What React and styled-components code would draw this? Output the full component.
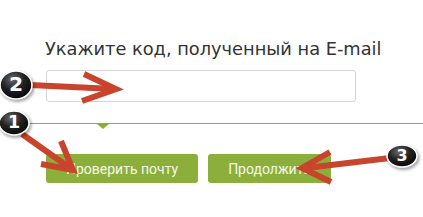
import styled, { createGlobalStyle } from "styled-components";

const Global = createGlobalStyle`
  html, body {
    margin: 0;
    padding: 0;
    background: #fff;
  }
`;

const Page = styled.div`
  position: relative;
  width: 423px;
  height: 217px;
  overflow: hidden;
  background: #fff;
  font-family: "DejaVu Sans", Verdana, sans-serif;
`;

const Section = styled.div`
  padding-left: 46px;
  padding-top: ${(p) => p.top || 0}px;
`;

const Title = styled.h2`
  margin: 0 0 0 -1px;
  font-size: 17.8px;
  line-height: 22px;
  font-weight: normal;
  color: #333;
`;

const Input = styled.input`
  display: block;
  box-sizing: border-box;
  margin-top: 10px;
  width: 310px;
  height: 32px;
  border: 1px solid #d4d4d4;
  border-radius: 3px;
  background: #fff;
  outline: none;
`;

const Divider = styled.div`
  position: relative;
  margin-top: 21px;
  height: 1px;
  background: #88b22c;

  &::after {
    content: "";
    position: absolute;
    left: 97px;
    top: 1px;
    border-left: 6px solid transparent;
    border-right: 6px solid transparent;
    border-top: 5px solid #88b22c;
  }
`;

const Buttons = styled.div`
  display: flex;
  gap: 10px;
  margin-top: 30px;
`;

const Button = styled.button`
  height: 29px;
  padding: 0 ${(p) => p.pad || 20}px;
  border: none;
  border-radius: 3px;
  background: #8caf3c;
  color: #f4f8ea;
  font-family: Roboto, "DejaVu Sans", sans-serif;
  font-size: 14px;
  cursor: pointer;
`;

const Overlay = styled.svg`
  position: absolute;
  left: 0;
  top: 0;
  pointer-events: none;
`;

const Badge = ({ cx, cy, rx, ry, label }) => (
  <g>
    <ellipse cx={cx + 1.5} cy={cy + 2} rx={rx + 1} ry={ry + 1} fill="#000" opacity="0.35" filter="url(#blur)" />
    <ellipse cx={cx} cy={cy} rx={rx} ry={ry} fill="url(#badge)" stroke="#fff" strokeWidth="1.6" />
    <text
      x={cx}
      y={cy + ry * 0.45}
      textAnchor="middle"
      fontFamily="'DejaVu Sans', sans-serif"
      fontWeight="bold"
      fontSize={ry * 1.45}
      fill="#fff"
    >
      {label}
    </text>
  </g>
);

const Arrow = ({ shaft, barbs }) => (
  <g stroke="#c9442c" strokeWidth="6" strokeLinecap="butt" fill="none">
    <line x1={shaft[0]} y1={shaft[1]} x2={shaft[2]} y2={shaft[3]} />
    <polyline points={barbs} strokeLinejoin="miter" />
  </g>
);

export default function App() {
  return (
    <Page>
      <Global />
      <Section top={38}>
        <Title>Укажите код, полученный на E-mail</Title>
        <Input />
      </Section>
      <Divider />
      <Section>
        <Buttons>
          <Button>Проверить почту</Button>
          <Button>Продолжить</Button>
        </Buttons>
      </Section>
      <Overlay width="423" height="217" viewBox="0 0 423 217">
        <defs>
          <radialGradient id="badge" cx="0.4" cy="0.3" r="0.8">
            <stop offset="0" stopColor="#6a6a6a" />
            <stop offset="0.45" stopColor="#222" />
            <stop offset="1" stopColor="#000" />
          </radialGradient>
          <filter id="blur" x="-0.5" y="-0.5" width="2" height="2">
            <feGaussianBlur stdDeviation="1.5" />
          </filter>
        </defs>
        <Arrow shaft={[30, 85, 114, 89]} barbs="84,74 116,89 82,101" />
        <Arrow shaft={[22, 134, 70, 168]} barbs="61,141 73,170 41,164" />
        <Arrow shaft={[390, 158, 306, 168]} barbs="330,152 302,168 331,182" />
        <Badge cx={16} cy={85} rx={16} ry={14} label="2" />
        <Badge cx={14} cy={123} rx={15} ry={12} label="1" />
        <Badge cx={402} cy={156} rx={15} ry={11} label="3" />
      </Overlay>
    </Page>
  );
}
